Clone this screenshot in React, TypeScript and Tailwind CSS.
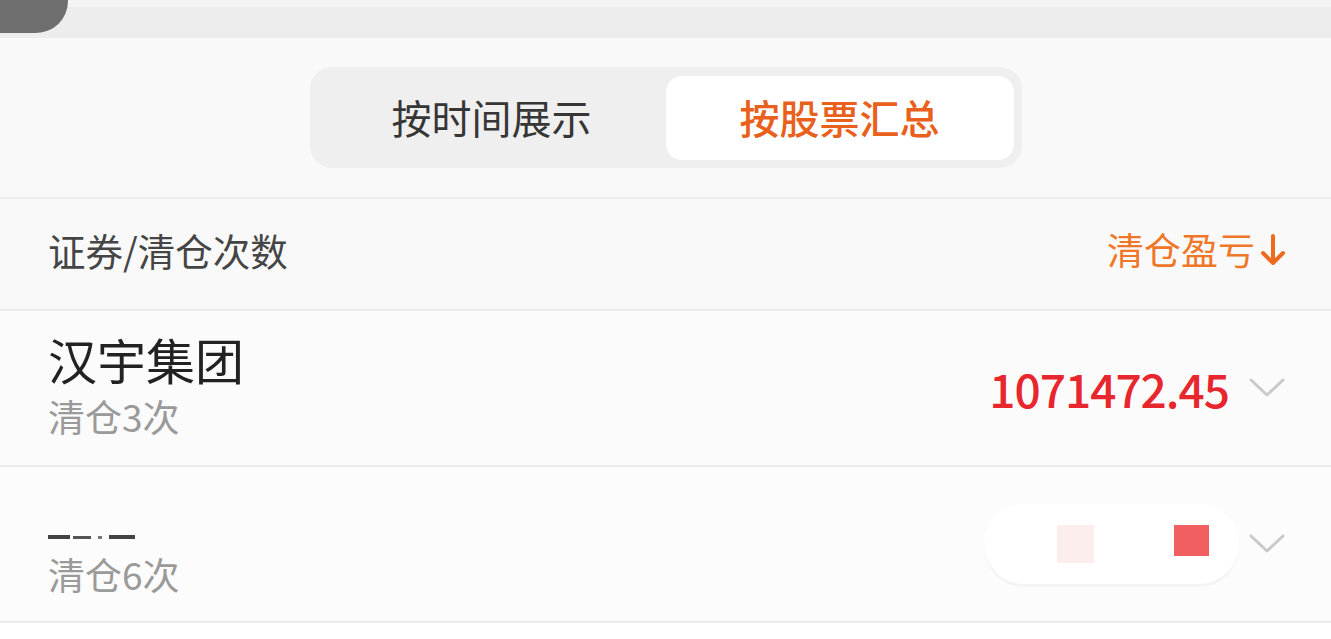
const cjk = "font-['Noto_Sans_CJK_SC','Noto_Sans',sans-serif]";

const Chevron = () => (
  <svg width="36" height="22" viewBox="0 0 36 22" className="shrink-0">
    <path d="M2 3 L18 18 L34 3" fill="none" stroke="#c9c9c9" strokeWidth="3" strokeLinecap="round" strokeLinejoin="round" />
  </svg>
);

const SegmentedTabs = () => (
  <div className="flex justify-center pt-[29px] pb-[29px]">
    <div className="flex w-[712px] h-[101px] rounded-[22px] bg-[#efefef] pt-[9px] pb-[8px] px-[8px]">
      <div className="flex-1 flex items-center justify-center pb-[3px] text-[40px] text-[#363636]">
        按时间展示
      </div>
      <div className="flex-1 flex items-center justify-center pb-[3px] rounded-[16px] bg-white text-[40px] font-medium text-[#e8601c]">
        按股票汇总
      </div>
    </div>
  </div>
);

export default function App() {
  return (
    <div className={`w-[1331px] h-[639px] overflow-hidden bg-[#f9f9f9] ${cjk}`}>
      {/* top strip */}
      <div className="relative h-[38px] bg-[#ededed] border-t-[7px] border-[#f4f4f4]">
        <div className="absolute left-0 top-[-7px] w-[68px] h-[33px] bg-[#6e6e6e] rounded-br-[32px]" />
      </div>

      <SegmentedTabs />

      {/* header */}
      <div className="flex items-center justify-between h-[114px] pb-[8px] px-[46px] pl-[48px] border-t-2 border-b-2 border-[#ececec]">
        <span className="text-[37.5px] text-[#454545]">证券/清仓次数</span>
        <span className="flex items-center gap-[6px] text-[37px] text-[#f07628]">
          清仓盈亏
          <svg width="24" height="32" viewBox="0 0 24 32">
            <path d="M12 2 V29 M2 19 L12 29 L22 19" fill="none" stroke="#ee6a1e" strokeWidth="4" strokeLinecap="round" strokeLinejoin="round" />
          </svg>
        </span>
      </div>

      {/* row 1 */}
      <div className="flex items-center justify-between h-[156px] pl-[48px] pr-[46px] bg-[#fbfbfb] border-b-2 border-[#ececec]">
        <div className="flex flex-col pb-[4px]">
          <span className="text-[49px] leading-[56px] text-[#222222]">汉宇集团</span>
          <span className="mt-[4px] text-[37px] leading-[50px] text-[#9a9a9a]">清仓3次</span>
        </div>
        <div className="flex items-center gap-[20px]">
          <span className="text-[46px] font-medium tracking-[-1px] text-[#e8262d]">1071472.45</span>
          <Chevron />
        </div>
      </div>

      {/* row 2 (partly redacted) */}
      <div className="flex items-center justify-between h-[156px] pl-[48px] pr-[46px] bg-[#fcfcfc] border-b-2 border-[#ececec]">
        <div className="flex flex-col pt-[30px]">
          <div className="flex items-end gap-[3px] h-[20px]">
            <span className="w-[22px] h-[4px] bg-[#444]" />
            <span className="w-[18px] h-[3px] bg-[#555]" />
            <span className="w-[4px] h-[3px] bg-[#777] ml-[4px]" />
            <span className="w-[26px] h-[4px] bg-[#444] ml-[4px]" />
          </div>
          <span className="mt-[10px] text-[37px] leading-[50px] text-[#9a9a9a]">清仓6次</span>
        </div>
        <div className="flex items-center gap-[10px]">
          <div className="flex items-center h-[80px] w-[255px] rounded-[40px] bg-white shadow-[0_3px_0_#f4f4f4]">
            <span className="ml-[73px] w-[37px] h-[38px] bg-[#fdeeee]" />
            <span className="ml-[80px] w-[35px] h-[31px] bg-[#f25f60] -mt-[8px]" />
          </div>
          <Chevron />
        </div>
      </div>

      <div className="h-[20px] bg-white" />
    </div>
  );
}
